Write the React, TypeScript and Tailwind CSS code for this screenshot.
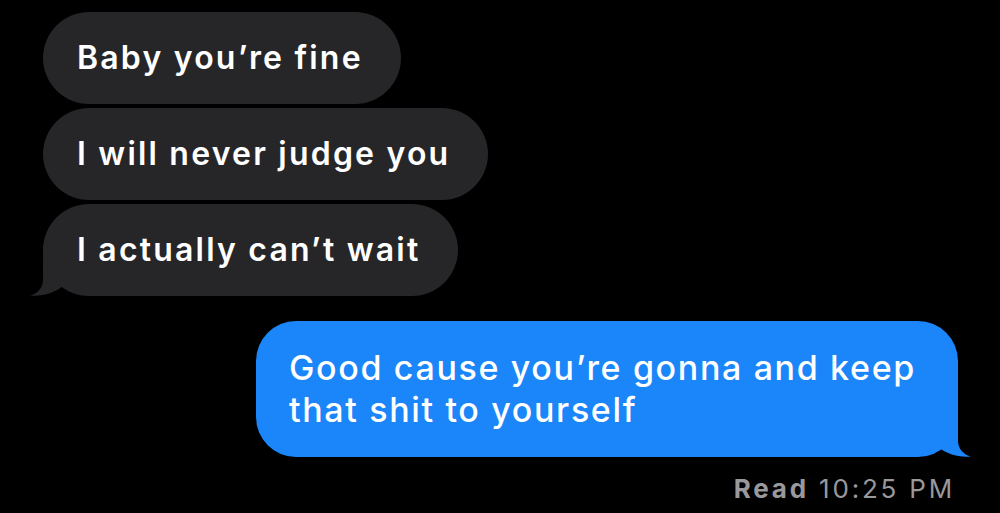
const font = { fontFamily: "Inter, 'Noto Sans', sans-serif" };

function LeftTail() {
  return (
    <svg
      className="absolute -left-[13px] bottom-0"
      width="45"
      height="50"
      viewBox="0 0 45 50"
    >
      <path
        d="M13 0 L13 33 C13 42 8 47 0.5 49.5 C13 50.5 24 47 33 40 L40 0 Z"
        fill="#262629"
      />
    </svg>
  );
}

function RightTail() {
  return (
    <svg
      className="absolute -right-[13px] bottom-0"
      width="45"
      height="50"
      viewBox="0 0 45 50"
    >
      <path
        d="M32 0 L32 33 C32 42 37 47 44.5 49.5 C32 50.5 21 47 12 40 L5 0 Z"
        fill="#1b86f9"
      />
    </svg>
  );
}

function Incoming({ text, tail }: { text: string; tail?: boolean }) {
  return (
    <div className="relative">
      {tail && <LeftTail />}
      <div className="relative rounded-[46px] bg-[#262629] pl-[34px] pr-[38px] py-[26px] text-[32px] leading-[40px] font-semibold tracking-[2.2px] text-white">
        {text}
      </div>
    </div>
  );
}

export default function App() {
  return (
    <div className="h-[513px] w-full overflow-hidden bg-black" style={font}>
      <div className="flex flex-col items-start gap-[4px] pl-[43px] pt-[12px]">
        <Incoming text="Baby you’re fine" />
        <Incoming text="I will never judge you" />
        <Incoming text="I actually can’t wait" tail />
      </div>
      <div className="mt-[25px] flex justify-end pr-[42px]">
        <div className="relative">
          <RightTail />
          <div className="relative w-[702px] rounded-[40px] bg-[#1b86f9] py-[26px] pl-[33px] pr-[20px] text-[34px] leading-[42px] font-medium tracking-[1.65px] text-white">
            Good cause you’re gonna and keep
            <br />
            that shit to yourself
          </div>
        </div>
      </div>
      <div className="mt-[16px] pr-[45px] text-right text-[26px] leading-[32px] tracking-[2.8px] text-[#98989d]">
        <span className="font-bold">Read</span> 10:25 PM
      </div>
    </div>
  );
}
